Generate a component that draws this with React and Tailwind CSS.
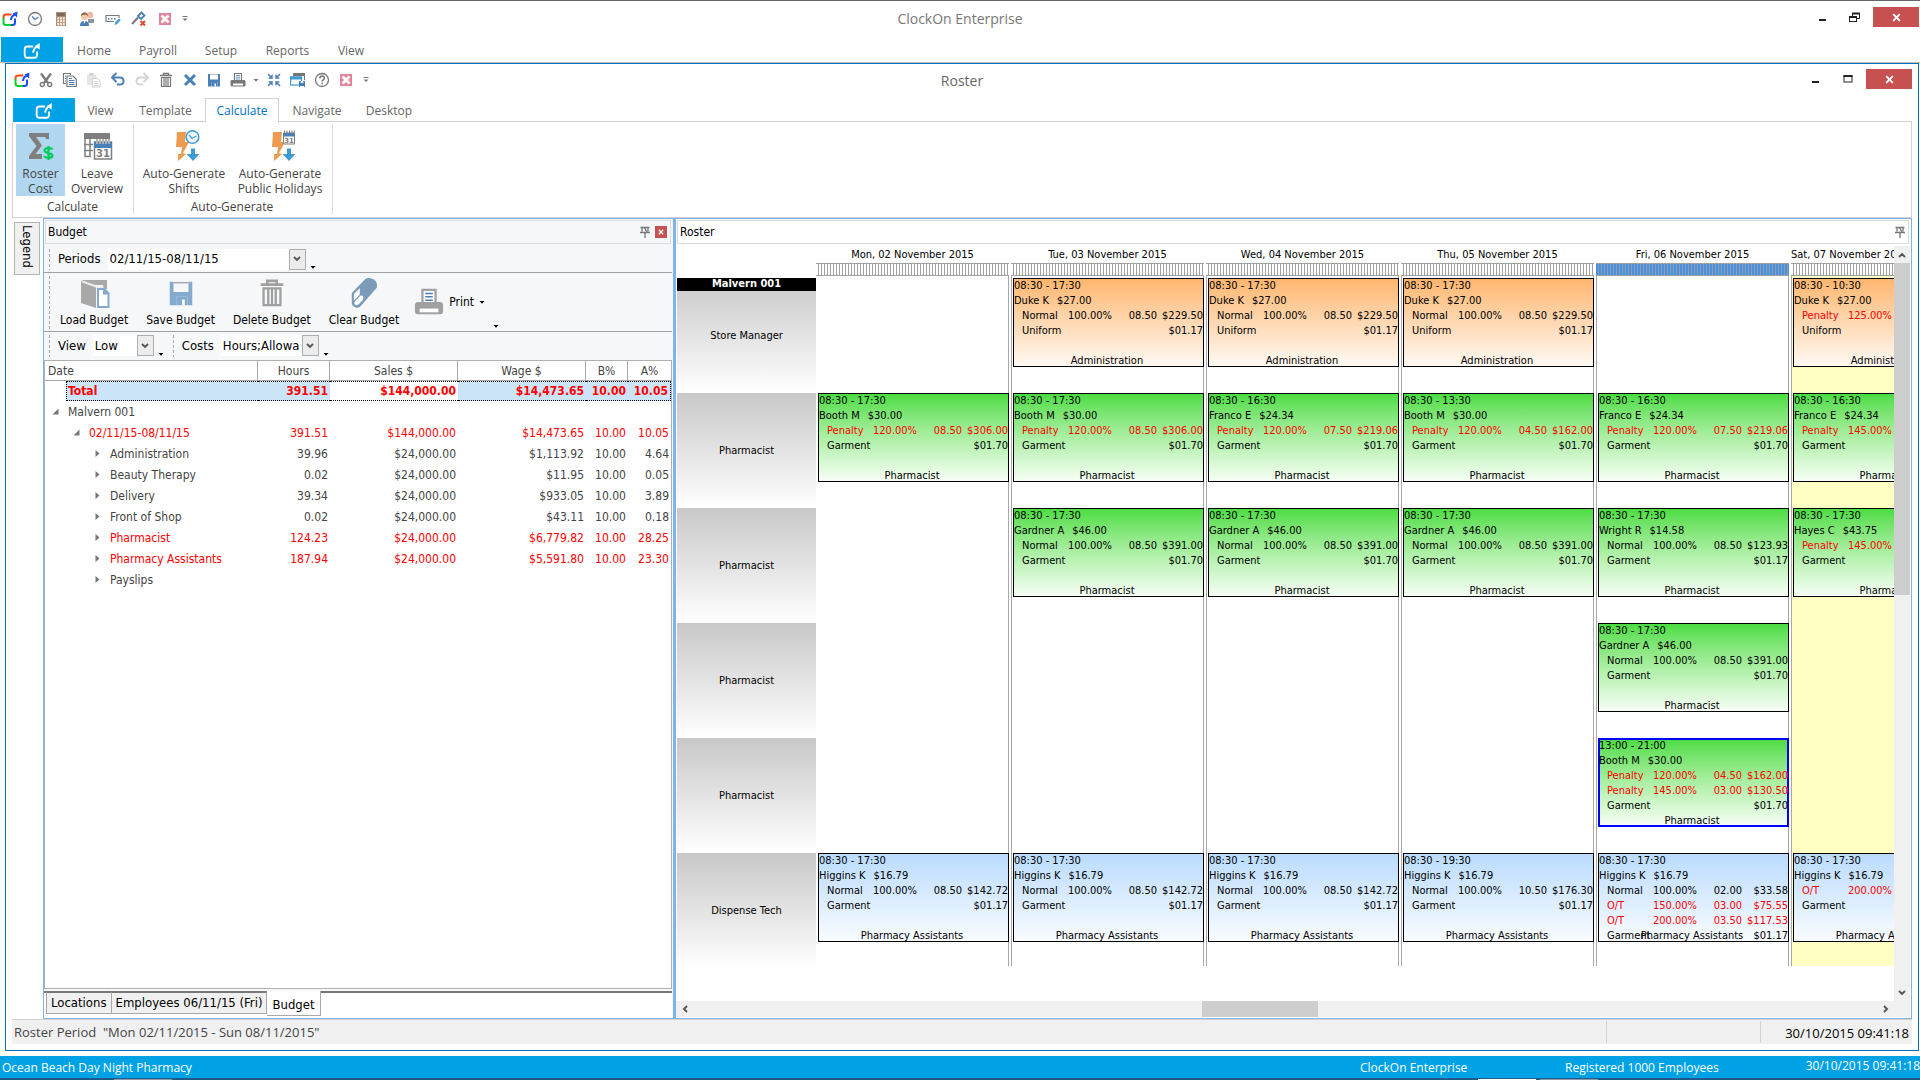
import clsx from "clsx";

const BLUE = "#4a80b8";
const GRAY = "#777777";

/* ---------- icons ---------- */

const Svg = ({ size = 16, box = 16, className, children }) => (
  <svg width={size} height={size} viewBox={`0 0 ${box} ${box}`} fill="none" className={clsx("shrink-0", className)}>
    {children}
  </svg>
);

const LogoIcon = () => (
  <Svg>
    <path d="M9.500 3.500H4C2.300 3.500 1.500 4.300 1.500 6v1.500" stroke="#ff4a12" strokeWidth="2" />
    <path d="M1.500 7v4.500c0 1.700.8 2.500 2.500 2.500h5" stroke="#00d42a" strokeWidth="2" />
    <path d="M9 14h1.500c1.700 0 2.500-.8 2.500-2.500V7.500" stroke="#1450ff" strokeWidth="2" />
    <path d="M9 9c.2-2.500 1.500-4.500 4-5.500" stroke="#1450ff" strokeWidth="2" />
    <path d="M10.500 2.500 15.500.5l-.5 6z" fill="#1450ff" />
  </Svg>
);

const WhiteLogo = () => (
  <Svg size={18}>
    <path d="M9 4H4C2.300 4 1.500 4.800 1.500 6.500v5C1.500 13.200 2.300 14 4 14h6c1.700 0 2.500-.8 2.500-2.500V8.500" stroke="#fff" strokeWidth="1.600" />
    <path d="M9 9.500c.2-2.500 1.500-4.500 3.700-5.700" stroke="#fff" strokeWidth="1.800" />
    <path d="M10.500 3.500 15 .8l-.3 6z" fill="#fff" />
  </Svg>
);

const ClockIcon = () => (
  <Svg>
    <circle cx="8" cy="8" r="6.500" stroke={GRAY} strokeWidth="1.300" fill="#f6fafd" />
    <path d="M5 5.500 8 8.500 11.500 6" stroke={BLUE} strokeWidth="1.300" />
  </Svg>
);

const CalculatorIcon = () => (
  <Svg>
    <rect x="3" y="1" width="10" height="14" fill="#b08d70" />
    <rect x="4" y="2" width="8" height="3" fill="#7d6a5a" />
    <path d="M4.200 6.200h2v2.200h-2zM7 6.200h2v2.200H7zM9.800 6.200h2v2.200h-2zM4.200 9.100h2v2.200h-2zM7 9.100h2v2.200H7zM9.800 9.100h2v2.200h-2zM4.200 12h2v2.200h-2zM7 12h2v2.200H7zM9.800 12h2v2.200h-2z" fill="#f6ebe0" />
  </Svg>
);

const PeopleIcon = () => (
  <Svg>
    <circle cx="11" cy="4" r="3.200" fill="#f0b8a4" />
    <path d="M9 8h6v4H9z" fill="#8a96a5" />
    <circle cx="5.500" cy="5.500" r="3.500" fill="#f3c9ab" />
    <path d="M2 5c0-5 7-5 7 0L7 3.800 4 4z" fill="#8d6b52" />
    <path d="M1 15c0-4 2-5 4.500-5s4.500 1 4.500 5z" fill={BLUE} />
    <path d="M4.500 10h2l-1 3z" fill="#fff" />
  </Svg>
);

const EntryIcon = () => (
  <Svg>
    <path d="M14 7V4.500H1v6h8" stroke={GRAY} strokeWidth="1.200" />
    <path d="M3 7h1.500v1.500H3zM6 7h1.500v1.500H6zM9 7h1.500v1.500H9z" fill={BLUE} />
    <path d="m9.500 14 .8-2.800L14 7.500l1.800 1.500-4 4.300z" fill="#3f9cd3" />
  </Svg>
);

const KeyIcon = () => (
  <Svg>
    <path d="M1 13 7 6.500" stroke={GRAY} strokeWidth="2" />
    <path d="m7 5 3.500-3.500 3 3L10 8z" stroke={BLUE} strokeWidth="1.800" />
    <path d="m9.500 10 4.500 4.500M14 10l-4.500 4.500" stroke="#dd4b31" strokeWidth="2" />
  </Svg>
);

const PinkCloseIcon = () => (
  <Svg>
    <rect x="2" y="2" width="12" height="12" fill="#e3849a" />
    <path d="m4.500 4.500 7 7M11.500 4.500l-7 7" stroke="#fff" strokeWidth="2.800" />
  </Svg>
);

const MenuTick = () => (
  <Svg size={8} box={8}>
    <path d="M1.500 1.500h5" stroke={GRAY} />
    <path d="M1.500 3.500h5L4 6z" fill={GRAY} />
  </Svg>
);

const Caret = ({ color = "#000" }) => (
  <Svg size={6} box={6}>
    <path d="M.5 2h5L3 4.800z" fill={color} />
  </Svg>
);

const ScissorsIcon = () => (
  <Svg>
    <path d="m3 1.500 7 9.500M13 1.500 6 11" stroke={GRAY} strokeWidth="2.200" />
    <circle cx="4.300" cy="12.500" r="2" stroke={GRAY} strokeWidth="1.300" />
    <circle cx="11.700" cy="12.500" r="2" stroke={GRAY} strokeWidth="1.300" />
  </Svg>
);

const CopyIcon = () => (
  <Svg>
    <path d="M4 11.500H1.500v-10h7V3" stroke={GRAY} strokeWidth="1.200" />
    <path d="M3 4h1M3 6.500h1M3 9h1" stroke={BLUE} />
    <path d="M5 4h6l3.300 3.300V14.500H5z" fill="#fff" stroke={GRAY} strokeWidth="1.200" />
    <path d="M7 6.500h3M7 8.500h5.500M7 10.500h5.500M7 12.500h5.500" stroke={BLUE} />
  </Svg>
);

const PasteIcon = () => (
  <Svg>
    <path d="M1 2.500h9V7H6v6H1z" fill="#e6e6e6" />
    <path d="M3.500 1h4v2.500h-4z" fill="#cfcfcf" />
    <path d="M6.500 6.500h5l2.500 2.500v6H6.500z" fill="#fff" stroke="#cfcfcf" />
    <path d="M8 9.500h4M8 11.500h4.500M8 13.500h4.500" stroke="#d8d8d8" />
  </Svg>
);

const UndoIcon = ({ color = BLUE, flip }) => (
  <Svg className={clsx(flip && "-scale-x-100")}>
    <path d="M3 5.500h6.500c2.500 0 4 1.300 4 3.400s-1.500 3.600-4 3.600H7" stroke={color} strokeWidth="2" />
    <path d="M6.500 1 2 5.500 6.500 10" stroke={color} strokeWidth="2" />
  </Svg>
);

const TrashIcon = ({ size = 16, color = GRAY }) => (
  <Svg size={size}>
    <path d="M5.500 3V1.500h5V3M2 3.500h12" stroke={color} strokeWidth="1.400" />
    <path d="M3.500 5.500h9v9h-9zM6 5.500v9M8 5.500v9M10 5.500v9" stroke={color} strokeWidth="1.200" />
  </Svg>
);

const CrossIcon = () => (
  <Svg>
    <path d="m3 3 10 10M13 3 3 13" stroke={BLUE} strokeWidth="3" />
  </Svg>
);

const DiskIcon = ({ size = 16, color = BLUE }) => (
  <Svg size={size}>
    <path d="M2 2h2v5.500h8V2h2v12.500h-2.500V10h-6v4.500H2z" fill={color} />
    <path d="M5.500 10h6v4.500h-6z" fill={color} />
    <path d="M8.500 11.500H10v3H8.500z" fill="#fff" />
    <path d="M4 2.500h8" stroke="#aaa" strokeWidth=".8" />
  </Svg>
);

const PrinterIcon = ({ size = 16, color = GRAY }) => (
  <Svg size={size}>
    <path d="M4.500 8V1.500h7V8" stroke={color} strokeWidth="1.200" fill="#fff" />
    <path d="M6 3.500h4M6 5.200h4M6 7h4" stroke={BLUE} strokeWidth=".8" />
    <path d="M2 8h12c.8 0 1.500.7 1.500 1.500V13c0 .8-.5 1.500-1.500 1.500H2C1 14.500.5 13.800.5 13V9.500C.5 8.700 1.200 8 2 8z" fill={color} />
    <path d="M3 11.500h10v2H3z" fill="#fff" />
  </Svg>
);

const CollapseIcon = () => (
  <Svg>
    <path d="m2 2 4 4M14 2l-4 4M2 14l4-4M14 14l-4-4" stroke={BLUE} strokeWidth="1.500" />
    <path d="M6.700 2v4.700H2zM9.300 2v4.700H14zM6.700 14V9.300H2zM9.300 14V9.300H14z" fill={BLUE} />
  </Svg>
);

const WindowsIcon = () => (
  <Svg>
    <path d="M3 1h12v3H3z" fill={GRAY} />
    <path d="M14.500 4v4" stroke={GRAY} />
    <rect x=".6" y="5" width="11" height="8" fill="#fff" stroke="#3f9cd3" strokeWidth="1.200" />
    <path d="M0 4.500h12v3H0z" fill="#3f9cd3" />
    <path d="M9 9h6v6.500l-1.500-1.500h-3L9 15.500z" fill={BLUE} />
    <path d="M10.800 9h2.500v2h-2.500z" fill="#fff" />
  </Svg>
);

const HelpIcon = () => (
  <Svg>
    <circle cx="8" cy="8" r="6.500" stroke={GRAY} strokeWidth="1.300" />
    <path d="M5.800 6.500c0-3.300 4.600-3 4.600-.4 0 1.700-2.300 1.700-2.300 3.400" stroke={GRAY} strokeWidth="1.500" />
    <path d="M7.300 10.800h1.600v1.500H7.300z" fill={GRAY} />
  </Svg>
);

const RosterCostIcon = () => (
  <Svg size={32} box={32}>
    <path d="M4 3h20v6h-3c0-1.500-.8-2-2-2H11l6 8.500L10.500 24H17v5H4v-3l7.500-10L4 6z" fill="#7f7f7f" />
    <path d="M27.500 19.500c-1-1.700-8-2.200-8 1s8 2 8 5-7 3-8.500.5M23.500 16v14" stroke="#00cc5a" strokeWidth="2.200" />
  </Svg>
);

const LeaveIcon = () => (
  <Svg size={32} box={32}>
    <path d="M3 3h26v6H3z" fill="#7f7f7f" />
    <path d="M4 9v17.500h6M9 9v17M3 14.500h9M3 20.500h9" stroke="#7f7f7f" strokeWidth="1.500" />
    <path d="M13.500 12h17v17h-17z" fill="#fff" stroke="#7f7f7f" strokeWidth="1.500" />
    <path d="M13 12h18v6H13z" fill="#4a80b8" />
    <path d="M16 9v5M19 9v5M22 9v5M25 9v5M28 9v5" stroke="#fff" strokeWidth="2" />
    <path d="M16 9v5M19 9v5M22 9v5M25 9v5M28 9v5" stroke="#7f7f7f" strokeWidth="1.200" />
    <text x="22" y="27" fontSize="10" fontWeight="700" textAnchor="middle" fill="#7f7f7f" fontFamily="DejaVu Sans">31</text>
  </Svg>
);

const BoltDown = ({ children }) => (
  <Svg size={32} box={32}>
    <g transform="translate(3 0)">
      <path d="M6 2h9l-1 10h4l-6 11 3 1-8 7V24h3l1-7H5z" fill="#ee9b50" />
      <path d="M20 18.500h4V24h4.500L22 31l-6.500-7H20z" fill="#3f9cd3" />
      {children}
    </g>
  </Svg>
);

const BoltClockIcon = () => (
  <BoltDown>
    <circle cx="21.500" cy="7" r="6.300" fill="#f4f9fd" stroke="#3f9cd3" strokeWidth="1.500" />
    <path d="m18 5 3 3.500L25.500 6" stroke="#3f9cd3" strokeWidth="1.300" />
  </BoltDown>
);

const BoltCalendarIcon = () => (
  <BoltDown>
    <path d="M16.500 3h11v11h-11z" fill="#fff" stroke="#7f7f7f" />
    <path d="M16 3h12v3.500H16z" fill="#4a80b8" />
    <path d="M17.500.5v3M20 .5v3M22.500.5v3M25 .5v3M27.300.5v3" stroke="#7f7f7f" />
    <text x="22" y="13" fontSize="7" fontWeight="700" textAnchor="middle" fill="#7f7f7f" fontFamily="DejaVu Sans">31</text>
  </BoltDown>
);

const LoadBudgetIcon = () => (
  <Svg size={32} box={32}>
    <path d="M3 3h26v9h-4V8h-8z" fill="#a8a8a8" />
    <path d="M3 4l15 6v21L3 26z" fill="#a8a8a8" />
    <path d="M4 5l14 5h8" stroke="#e8e8e8" strokeWidth="1.200" />
    <path d="M20 12h6.500l4 4.500V30H20z" fill="#fff" stroke="#84aad0" strokeWidth="2" />
    <path d="M25 11v6.500h6z" fill="#84aad0" />
  </Svg>
);

const EraserIcon = () => (
  <Svg size={34} box={32}>
    <path d="M17 3c4-3 13 0 11 8L14 27c-3 5-10 3-9.500-3v-8z" fill="#7b9cb8" />
    <path d="M6.500 17 12 11.500v6L6.500 23zM12.500 18.500c2.500-1 4 2 2 4.500l-4 4c-3 1.500-4.500-1-3-3z" fill="#fff" />
  </Svg>
);

const PinIcon = () => (
  <Svg size={12} box={12}>
    <path d="M1.500 1.500h9M3 1.500v4M9 1.500v4M1 6.500h10M6 6.500V12" stroke="#777" strokeWidth="1.300" />
    <path d="M5 2h1.500l2 4H7z" fill="#777" />
  </Svg>
);

const CloseGlyph = ({ size = 9 }) => (
  <Svg size={size} box={9}>
    <path d="m1.200 1.200 6.600 6.600M7.800 1.200 1.200 7.800" stroke="#fff" strokeWidth="1.900" />
  </Svg>
);

const Chevron = ({ className }) => (
  <Svg size={8} box={8} className={className}>
    <path d="m1 2 3 3 3-3" stroke="#555" strokeWidth="1.900" />
  </Svg>
);

/* ---------- data ---------- */

const ribbonButtons = {
  calculate: [
    { icon: <RosterCostIcon />, lines: ["Roster", "Cost"], width: "w-[49px]", active: true },
    { icon: <LeaveIcon />, lines: ["Leave", "Overview"], width: "w-[64px]" },
  ],
  generate: [
    { icon: <BoltClockIcon />, lines: ["Auto-Generate", "Shifts"], width: "w-[96px]" },
    { icon: <BoltCalendarIcon />, lines: ["Auto-Generate", "Public Holidays"], width: "w-[96px]" },
  ],
};

const budgetRows = [
  { name: "Malvern 001", level: 0, open: true, values: ["", "", "", "", ""] },
  { name: "02/11/15-08/11/15", level: 1, open: true, over: true, values: ["391.51", "$144,000.00", "$14,473.65", "10.00", "10.05"] },
  { name: "Administration", level: 2, values: ["39.96", "$24,000.00", "$1,113.92", "10.00", "4.64"] },
  { name: "Beauty Therapy", level: 2, values: ["0.02", "$24,000.00", "$11.95", "10.00", "0.05"] },
  { name: "Delivery", level: 2, values: ["39.34", "$24,000.00", "$933.05", "10.00", "3.89"] },
  { name: "Front of Shop", level: 2, values: ["0.02", "$24,000.00", "$43.11", "10.00", "0.18"] },
  { name: "Pharmacist", level: 2, over: true, values: ["124.23", "$24,000.00", "$6,779.82", "10.00", "28.25"] },
  { name: "Pharmacy Assistants", level: 2, over: true, values: ["187.94", "$24,000.00", "$5,591.80", "10.00", "23.30"] },
  { name: "Payslips", level: 2, values: ["", "", "", "", ""] },
];

const indents = ["pl-[7px]", "pl-[28px]", "pl-[49px]"];

const tones = {
  orange: "bg-linear-to-b from-[#ffb56b] to-[#fffaf5]",
  green: "bg-linear-to-b from-[#46dc3c] to-[#f8fef7]",
  blue: "bg-linear-to-b from-[#b9dbff] to-[#fafcff]",
};

const shift = (tone, dept, time, name, rate, lines, extra) => ({ tone, dept, time, name, rate, lines, extra });
const normal = (hours, amount) => ["Normal", "100.00%", hours, amount];
const penalty = (pct, hours, amount) => ["Penalty", pct, hours, amount, true];
const overtime = (pct, hours, amount) => ["O/T", pct, hours, amount, true];

const duke = shift("orange", "Administration", "08:30 - 17:30", "Duke K", "$27.00", [normal("08.50", "$229.50")], ["Uniform", "$01.17"]);
const booth = shift("green", "Pharmacist", "08:30 - 17:30", "Booth M", "$30.00", [penalty("120.00%", "08.50", "$306.00")], ["Garment", "$01.70"]);
const franco = shift("green", "Pharmacist", "08:30 - 16:30", "Franco E", "$24.34", [penalty("120.00%", "07.50", "$219.06")], ["Garment", "$01.70"]);
const gardner = shift("green", "Pharmacist", "08:30 - 17:30", "Gardner A", "$46.00", [normal("08.50", "$391.00")], ["Garment", "$01.70"]);
const higgins = shift("blue", "Pharmacy Assistants", "08:30 - 17:30", "Higgins K", "$16.79", [normal("08.50", "$142.72")], ["Garment", "$01.17"]);

const roles = ["Store Manager", "Pharmacist", "Pharmacist", "Pharmacist", "Pharmacist", "Dispense Tech"];

const days = [
  { title: "Mon, 02 November 2015", shifts: [null, booth, null, null, null, higgins] },
  { title: "Tue, 03 November 2015", shifts: [duke, booth, gardner, null, null, higgins] },
  { title: "Wed, 04 November 2015", shifts: [duke, franco, gardner, null, null, higgins] },
  {
    title: "Thu, 05 November 2015",
    shifts: [
      duke,
      { ...booth, time: "08:30 - 13:30", lines: [penalty("120.00%", "04.50", "$162.00")] },
      gardner,
      null,
      null,
      { ...higgins, time: "08:30 - 19:30", lines: [normal("10.50", "$176.30")] },
    ],
  },
  {
    title: "Fri, 06 November 2015",
    today: true,
    shifts: [
      null,
      franco,
      { ...gardner, name: "Wright R", rate: "$14.58", lines: [normal("08.50", "$123.93")], extra: ["Garment", "$01.17"] },
      gardner,
      {
        ...booth,
        selected: true,
        time: "13:00 - 21:00",
        lines: [penalty("120.00%", "04.50", "$162.00"), penalty("145.00%", "03.00", "$130.50")],
      },
      {
        ...higgins,
        lines: [normal("02.00", "$33.58"), overtime("150.00%", "03.00", "$75.55"), overtime("200.00%", "03.50", "$117.53")],
      },
    ],
  },
  {
    title: "Sat, 07 November 2015",
    weekend: true,
    shifts: [
      { ...duke, time: "08:30 - 10:30", lines: [penalty("125.00%")], extra: ["Uniform"] },
      { ...franco, lines: [penalty("145.00%")], extra: ["Garment"] },
      { ...gardner, name: "Hayes C", rate: "$43.75", lines: [penalty("145.00%")], extra: ["Garment"] },
      null,
      null,
      { ...higgins, lines: [overtime("200.00%")], extra: ["Garment"] },
    ],
  },
];

/* ---------- window chrome ---------- */

const QuickButton = ({ label, width = "w-[24px]", children }) => (
  <button type="button" aria-label={label} className={clsx("flex h-5 items-center justify-center", width)}>
    {children}
  </button>
);

const WindowButtons = ({ restore }) => (
  <div className="flex items-start">
    <button type="button" aria-label="Minimise" className="flex h-[20px] w-[31px] items-center justify-center">
      <Svg size={9} box={9}>
        <path d="M1 7h7" stroke="#222" strokeWidth="2" />
      </Svg>
    </button>
    <button type="button" aria-label="Restore" className="flex h-[20px] w-[33px] items-center justify-center">
      {restore ? (
        <Svg size={11} box={11}>
          <path d="M3.500 4V1.500h7v5H8" stroke="#222" />
          <path d="M3 1.500h8" stroke="#222" strokeWidth="2" />
          <rect x=".5" y="4.500" width="7" height="5" fill="#fff" stroke="#222" />
          <path d="M0 5h8" stroke="#222" strokeWidth="2" />
        </Svg>
      ) : (
        <Svg size={10} box={10}>
          <rect x="1" y="2" width="8" height="6" stroke="#222" />
          <path d="M.5 2h9" stroke="#222" strokeWidth="2" />
        </Svg>
      )}
    </button>
    <button type="button" aria-label="Close" className="ml-[2px] flex h-[20px] w-[46px] items-center justify-center bg-[#c75050]">
      <CloseGlyph />
    </button>
  </div>
);

const RibbonButton = ({ icon, lines, width, active }) => (
  <button
    type="button"
    className={clsx("flex h-[72px] flex-col items-center pt-[6px] text-xs leading-[15px] text-[#444]", width, active && "bg-[#b1d6f0]")}
  >
    {icon}
    <span className="mt-[4px] block">{lines[0]}</span>
    <span className="block whitespace-nowrap">{lines[1]}</span>
  </button>
);

const RibbonGroup = ({ title, buttons, className }) => (
  <div className={clsx("flex h-[90px] flex-col items-center border-r border-[#dadada]", className)}>
    <div className="flex">
      {buttons.map((button) => (
        <RibbonButton key={button.lines.join(" ")} {...button} />
      ))}
    </div>
    <div className="mt-[3px] text-xs leading-[15px] text-[#444]">{title}</div>
  </div>
);

/* ---------- budget panel ---------- */

const Grip = () => <div className="w-[3px] self-stretch bg-[radial-gradient(#aaa_1px,transparent_1px)] bg-[length:3px_5px]" />;

const Combo = ({ id, label, value, width }) => (
  <>
    <label htmlFor={id} className="pl-[7px] text-[13px]">
      {label}
    </label>
    <div className={clsx("relative ml-[7px] h-[21px] bg-white text-[13px]", width)}>
      <select id={id} className="h-[21px] w-full appearance-none bg-transparent pr-[18px] pl-[2px] outline-none">
        <option>{value}</option>
      </select>
      <span className="pointer-events-none absolute inset-y-0 right-0 flex w-[17px] items-center justify-center border border-[#acacac] bg-[#ececec]">
        <Chevron />
      </span>
    </div>
    <span className="ml-1 self-end">
      <Caret />
    </span>
  </>
);

const BudgetButton = ({ icon, label }) => (
  <button type="button" className="flex h-[55px] flex-col items-center justify-between px-[9px]">
    <span className="flex h-[36px] items-center">{icon}</span>
    <span className="leading-5 whitespace-nowrap">{label}</span>
  </button>
);

const TreeMark = ({ open }) => (
  <Svg size={7} box={7}>
    <path d={open ? "M6.500.5v6h-6z" : "M1.500 0v7L5.500 3.500z"} fill="#777" />
  </Svg>
);

const BudgetTable = () => (
  <div className="min-h-0 flex-1 border border-[#b0b0b0] bg-white">
    <table className="w-full table-fixed border-separate border-spacing-0 text-[#444]">
      <colgroup>
        <col />
        <col className="w-[72px]" />
        <col className="w-[128px]" />
        <col className="w-[128px]" />
        <col className="w-[42px]" />
        <col className="w-[43px]" />
      </colgroup>
      <thead>
        <tr className="h-[20px]">
          <th className="border-r border-b border-[#a8a8a8] p-0 pl-[3px] text-left font-normal">Date</th>
          {["Hours", "Sales $", "Wage $", "B%", "A%"].map((title) => (
            <th key={title} className="border-r border-b border-[#a8a8a8] p-0 font-normal last:border-r-0">
              {title}
            </th>
          ))}
        </tr>
      </thead>
      <tbody>
        <tr className="font-bold text-[#ff0000]">
          <td className="p-0 pl-[21px]">
            <div className="h-[20px] border-y border-l border-dotted border-black bg-[#cce4f7] pl-px leading-[18px]">Total</div>
          </td>
          {["391.51", "$144,000.00", "$14,473.65", "10.00", "10.05"].map((value, i) => (
            <td
              key={i}
              className={clsx(
                "h-[20px] border-y border-dotted border-black p-0 pr-[2px] text-right leading-[18px] last:border-r",
                i !== 1 && "bg-[#cce4f7]"
              )}
            >
              {value}
            </td>
          ))}
        </tr>
        {budgetRows.map((row) => (
          <tr key={row.name} className={clsx("h-[21px]", row.over && "text-[#ff0000]")}>
            <td className={clsx("p-0", indents[row.level])}>
              <div className="flex items-center gap-[9px] whitespace-nowrap">
                <TreeMark open={row.open} />
                {row.name}
              </div>
            </td>
            {row.values.map((value, i) => (
              <td key={i} className="p-0 pr-[2px] text-right">
                {value}
              </td>
            ))}
          </tr>
        ))}
      </tbody>
    </table>
  </div>
);

const BudgetPanel = () => (
  <section className="flex w-[631px] shrink-0 flex-col border border-[#7eb4ea] bg-[#f5f7f9] pr-px text-xs text-black">
    <header className="m-px flex h-[24px] items-center border border-[#dcdcdc] pr-[3px] pl-[2px]">
      <h2 className="flex-1">Budget</h2>
      <button type="button" aria-label="Pin" className="mr-1">
        <PinIcon />
      </button>
      <button type="button" aria-label="Close" className="flex h-[12px] w-[12px] items-center justify-center bg-[#c75050]">
        <CloseGlyph size={6} />
      </button>
    </header>
    <div className="mt-px flex h-[27px] items-center border-b border-[#a0a0a0] py-[2px] pl-1">
      <Grip />
      <Combo id="periods" label="Periods" value="02/11/15-08/11/15" width="w-[198px]" />
    </div>
    <div className="flex h-[59px] items-start border-b border-[#a0a0a0] py-[2px] pl-1">
      <Grip />
      <BudgetButton label="Load Budget" icon={<LoadBudgetIcon />} />
      <BudgetButton label="Save Budget" icon={<DiskIcon size={30} color="#84aad0" />} />
      <BudgetButton label="Delete Budget" icon={<TrashIcon size={30} color="#a0a0a0" />} />
      <BudgetButton label="Clear Budget" icon={<EraserIcon />} />
      <button type="button" className="ml-[6px] flex h-[54px] items-center gap-[5px]">
        <PrinterIcon size={30} color="#a0a0a0" />
        <span>Print</span>
        <Caret />
      </button>
      <span className="ml-2 self-end">
        <Caret />
      </span>
    </div>
    <div className="mb-px flex h-[27px] items-center py-[2px] pl-1">
      <Grip />
      <Combo id="view" label="View" value="Low" width="w-[61px]" />
      <span className="w-[8px]" />
      <Grip />
      <Combo id="costs" label="Costs" value="Hours;Allowa" width="w-[98px]" />
    </div>
    <BudgetTable />
    <nav className="mt-[2px] flex h-[27px] items-start bg-white text-[13px]">
      <span className="h-[2px] w-[2px] bg-[#777]" />
      <button type="button" className="h-[23px] border border-t-2 border-[#a8a8a8] border-t-[#777] bg-[#f0f0f0] px-1">
        Locations
      </button>
      <button type="button" className="h-[23px] border border-t-2 border-l-0 border-[#a8a8a8] border-t-[#777] bg-[#f0f0f0] px-1">
        Employees 06/11/15 (Fri)
      </button>
      <button type="button" className="h-[25px] border-r border-b border-[#a8a8a8] bg-white px-[5px] pt-1">
        Budget
      </button>
      <span className="h-[2px] flex-1 bg-[#777]" />
    </nav>
  </section>
);

/* ---------- roster panel ---------- */

const PayLine = ({ line: [label, pct, hours, amount, red] }) => (
  <div className={clsx("grid grid-cols-[46px_44px_45px_1fr] pl-[8px] text-right", red && "text-[#ff0000]")}>
    <span className="text-left">{label}</span>
    <span>{pct}</span>
    <span>{hours}</span>
    <span>{amount}</span>
  </div>
);

const ShiftCard = ({ shift }) => (
  <div
    className={clsx(
      "relative -mr-px h-[89px] w-[191px] pr-px pl-px leading-[15px] whitespace-nowrap ring-inset",
      tones[shift.tone],
      shift.selected ? "ring-2 ring-[#0000ff]" : "ring-1 ring-black"
    )}
  >
    <div>{shift.time}</div>
    <div className="flex gap-2">
      <span>{shift.name}</span>
      <span>{shift.rate}</span>
    </div>
    {shift.lines.map((line, i) => (
      <PayLine key={i} line={line} />
    ))}
    <PayLine line={[shift.extra[0], "", "", shift.extra[1]]} />
    <div className="absolute inset-x-0 top-[75px] pr-[3px] text-center">{shift.dept}</div>
  </div>
);

const DayColumn = ({ day, first }) => (
  <div className="w-[193px] shrink-0">
    <div className={clsx("h-[17px] leading-[18px] whitespace-nowrap", day.weekend ? "text-left" : "text-center")}>{day.title}</div>
    <div
      className={clsx(
        "h-[13px] border-y border-[#a0a0a0]",
        day.today
          ? "bg-[repeating-linear-gradient(90deg,#4a90e0_0_2px,#8c9cb0_2px_3px)]"
          : "bg-[repeating-linear-gradient(90deg,#fff_0_2px,#a0a0a0_2px_3px)]"
      )}
    />
    <div
      className={clsx(
        "h-[690px] border-r border-l border-r-[#a8a8ac] pt-[2px] pl-px",
        first ? "border-l-transparent" : "border-l-[#a8a8ac]",
        day.weekend && "bg-[#ffffc4]"
      )}
    >
      {day.shifts.map((item, i) => (
        <div key={i} className="h-[115px]">
          {item && <ShiftCard shift={item} />}
        </div>
      ))}
    </div>
  </div>
);

const RosterPanel = () => (
  <section className="flex min-w-0 flex-1 flex-col border border-l-2 border-[#7eb4ea] bg-white pr-px text-[11px] text-black">
    <header className="m-px flex h-[24px] items-center border border-[#dcdcdc] pr-[2px] pl-[2px]">
      <h2 className="flex-1 text-xs">Roster</h2>
      <button type="button" aria-label="Pin">
        <PinIcon />
      </button>
    </header>
    <div className="mt-px flex min-h-0 flex-1">
      <div className="flex min-w-0 flex-1 items-start overflow-hidden">
        <div className="mt-[32px] ml-px w-[139px] shrink-0">
          {roles.map((role, i) => (
            <div key={i} className="relative flex h-[115px] items-center justify-center bg-linear-to-b from-[#c8c8c8] to-white pt-[2px]">
              {i === 0 && (
                <div className="absolute inset-x-0 top-0 h-[13px] bg-black text-center leading-[12px] font-bold text-white">
                  Malvern 001
                </div>
              )}
              {role}
            </div>
          ))}
        </div>
        <div className="flex gap-[2px]">
          {days.map((day, i) => (
            <DayColumn key={day.title} day={day} first={i === 0} />
          ))}
        </div>
      </div>
      <div className="flex w-[16px] flex-col items-center bg-[#f0f0f0]">
        <button type="button" aria-label="Scroll up" className="flex h-[17px] items-center">
          <Chevron className="rotate-180" />
        </button>
        <div className="h-[332px] w-full bg-[#cdcdcd]" />
        <button type="button" aria-label="Scroll down" className="mt-auto flex h-[17px] items-center">
          <Chevron />
        </button>
      </div>
    </div>
    <div className="mb-px flex h-[16px] items-center bg-[#f0f0f0] pr-4">
      <button type="button" aria-label="Scroll left" className="flex w-[17px] justify-center">
        <Chevron className="rotate-90" />
      </button>
      <div className="flex h-full flex-1">
        <div className="w-[43%]" />
        <div className="w-[116px] bg-[#cdcdcd]" />
      </div>
      <button type="button" aria-label="Scroll right" className="flex w-[17px] justify-center">
        <Chevron className="-rotate-90" />
      </button>
    </div>
  </section>
);

/* ---------- windows ---------- */

const RosterWindow = () => (
  <div className="mr-px ml-[5px] flex min-h-0 flex-1 flex-col border border-[#0072bc] bg-white pr-[6px] pb-[6px] pl-[6px]">
    <div className="grid h-[34px] grid-cols-[1fr_auto_1fr]">
      <div className="flex items-center pb-[2px]">
        <QuickButton label="ClockOn" width="w-[20px]">
          <LogoIcon />
        </QuickButton>
        <div className="ml-[2px] flex">
          <QuickButton label="Cut"><ScissorsIcon /></QuickButton>
          <QuickButton label="Copy"><CopyIcon /></QuickButton>
          <QuickButton label="Paste"><PasteIcon /></QuickButton>
          <QuickButton label="Undo"><UndoIcon /></QuickButton>
          <QuickButton label="Redo"><UndoIcon color="#d4d4d4" flip /></QuickButton>
          <QuickButton label="Delete"><TrashIcon /></QuickButton>
          <QuickButton label="Remove"><CrossIcon /></QuickButton>
          <QuickButton label="Save"><DiskIcon /></QuickButton>
          <QuickButton label="Print"><PrinterIcon /></QuickButton>
          <QuickButton label="Print options" width="w-[12px]"><Caret color="#777" /></QuickButton>
          <QuickButton label="Collapse"><CollapseIcon /></QuickButton>
          <QuickButton label="Windows"><WindowsIcon /></QuickButton>
          <QuickButton label="Help"><HelpIcon /></QuickButton>
          <QuickButton label="Exit"><PinkCloseIcon /></QuickButton>
          <QuickButton label="Customise" width="w-[16px]"><MenuTick /></QuickButton>
        </div>
      </div>
      <h1 className="self-center text-sm text-[#666]">Roster</h1>
      <div className="flex justify-end pt-[5px]">
        <WindowButtons />
      </div>
    </div>

    <nav className="flex h-[24px] items-stretch text-xs text-[#666]">
      <button type="button" aria-label="Roster menu" className="ml-px flex w-[62px] items-center justify-center bg-[#00a2e6] pt-[2px]">
        <WhiteLogo />
      </button>
      <button type="button" className="w-[51px] border-b border-[#d2d2d2] pt-[2px]">View</button>
      <button type="button" className="w-[79px] border-b border-[#d2d2d2] pt-[2px]">Template</button>
      <button type="button" className="w-[74px] border border-b-0 border-[#d2d2d2] pt-px text-[#0072c6]">Calculate</button>
      <button type="button" className="w-[76px] border-b border-[#d2d2d2] pt-[2px]">Navigate</button>
      <button type="button" className="w-[68px] border-b border-[#d2d2d2] pt-[2px]">Desktop</button>
      <span className="flex-1 border-b border-[#d2d2d2]" />
    </nav>
    <div className="flex h-[96px] border border-t-0 border-[#d2d2d2] pt-[2px]">
      <RibbonGroup title="Calculate" buttons={ribbonButtons.calculate} className="pr-[4px] pl-[3px]" />
      <RibbonGroup title="Auto-Generate" buttons={ribbonButtons.generate} className="pr-[4px] pl-[2px]" />
    </div>

    <div className="flex min-h-0 flex-1 font-['DejaVu_Sans_Condensed','DejaVu_Sans',sans-serif]">
      <div className="w-[31px] pt-1 pl-[2px]">
        <button
          type="button"
          className="h-[53px] w-[26px] border border-[#b4b4b4] bg-[#f0f0f0] pb-1 text-center text-[13px] [writing-mode:vertical-rl]"
        >
          Legend
        </button>
      </div>
      <BudgetPanel />
      <RosterPanel />
    </div>

    <footer className="flex h-[25px] items-center border-t border-[#d2d2d2] bg-[#f0f0f0] text-[13px] text-[#444]">
      <span className="flex-1 pt-[2px] pl-[2px] whitespace-pre">Roster Period  "Mon 02/11/2015 - Sun 08/11/2015"</span>
      <span className="h-[22px] w-[154px] border-l border-[#d2d2d2]" />
      <time className="h-[22px] w-[152px] border-l border-[#d2d2d2] pr-[3px] text-right leading-[24px] text-black">30/10/2015 09:41:18</time>
    </footer>
  </div>
);

export default function App() {
  return (
    <div className="flex h-screen min-h-[700px] flex-col overflow-hidden border-t border-[#666] bg-white font-['Open_Sans',sans-serif]">
      <div className="grid h-[36px] grid-cols-[1fr_auto_1fr]">
        <div className="flex items-center">
          <QuickButton label="ClockOn" width="w-[20px]"><LogoIcon /></QuickButton>
          <div className="ml-[2px] flex">
            <QuickButton label="Time clock" width="w-[26px]"><ClockIcon /></QuickButton>
            <QuickButton label="Calculator" width="w-[26px]"><CalculatorIcon /></QuickButton>
            <QuickButton label="Employees" width="w-[26px]"><PeopleIcon /></QuickButton>
            <QuickButton label="Data entry" width="w-[26px]"><EntryIcon /></QuickButton>
            <QuickButton label="Log out" width="w-[26px]"><KeyIcon /></QuickButton>
            <QuickButton label="Exit" width="w-[26px]"><PinkCloseIcon /></QuickButton>
            <QuickButton label="Customise" width="w-[14px]"><MenuTick /></QuickButton>
          </div>
        </div>
        <h1 className="self-center text-sm text-[#777]">ClockOn Enterprise</h1>
        <div className="flex justify-end pt-[6px] pr-px">
          <WindowButtons restore />
        </div>
      </div>
      <nav className="flex h-[26px] items-stretch border-b border-[#c0c0c0] text-xs text-[#666]">
        <button type="button" aria-label="Main menu" className="ml-px flex w-[62px] items-center justify-center bg-[#00a2e6] pt-[2px]">
          <WhiteLogo />
        </button>
        <button type="button" className="w-[62px] pt-[3px]">Home</button>
        <button type="button" className="w-[66px] pt-[3px]">Payroll</button>
        <button type="button" className="w-[60px] pt-[3px]">Setup</button>
        <button type="button" className="w-[73px] pt-[3px]">Reports</button>
        <button type="button" className="w-[54px] pt-[3px]">View</button>
      </nav>
      <RosterWindow />
      <footer className="mt-[5px] grid h-[22px] grid-cols-[1360px_205px_1fr_auto] items-center bg-[#00a2e6] text-xs whitespace-nowrap text-white">
        <span className="pt-[2px] pl-[2px]">Ocean Beach Day Night Pharmacy</span>
        <span className="pt-[2px]">ClockOn Enterprise</span>
        <span className="pt-[2px]">Registered 1000 Employees</span>
        <time className="self-start leading-[19px]">30/10/2015 09:41:18</time>
      </footer>
      <div className="flex h-[2px] shrink-0 items-end gap-1 bg-[#1d5a8a]">
        <span className="ml-[114px] h-px w-[58px] bg-[#8a9aa8]" />
        <span className="ml-auto h-px w-[58px] bg-white" />
        <span className="mr-[322px] h-px w-[58px] bg-[#8a9aa8]" />
      </div>
    </div>
  );
}
